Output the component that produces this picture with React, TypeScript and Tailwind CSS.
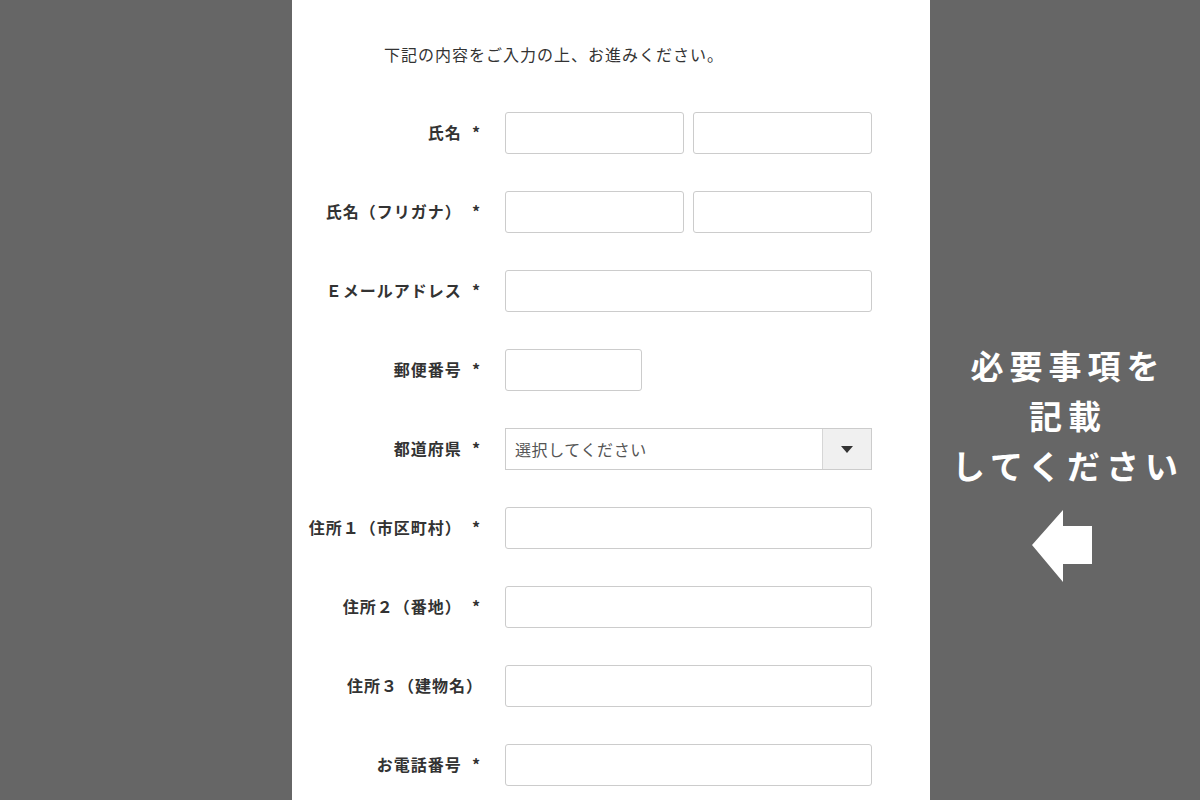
const FONT = "font-['Noto_Sans_CJK_JP','Noto_Sans',sans-serif]";

type Row = {
  label: string;
  required: boolean;
  kind: "text" | "split" | "short" | "select";
};

const rows: Row[] = [
  { label: "氏名", required: true, kind: "split" },
  { label: "氏名（フリガナ）", required: true, kind: "split" },
  { label: "Ｅメールアドレス", required: true, kind: "text" },
  { label: "郵便番号", required: true, kind: "short" },
  { label: "都道府県", required: true, kind: "select" },
  { label: "住所１（市区町村）", required: true, kind: "text" },
  { label: "住所２（番地）", required: true, kind: "text" },
  { label: "住所３（建物名）", required: false, kind: "text" },
  { label: "お電話番号", required: true, kind: "text" },
];

const inputCls =
  "h-[42px] rounded-[3px] border border-[#cccccc] bg-white outline-none";

function Field({ kind }: { kind: Row["kind"] }) {
  if (kind === "split") {
    return (
      <div className="flex gap-[9px]">
        <input type="text" className={`${inputCls} w-[179px]`} />
        <input type="text" className={`${inputCls} w-[179px]`} />
      </div>
    );
  }
  if (kind === "short") {
    return <input type="text" className={`${inputCls} w-[137px]`} />;
  }
  if (kind === "select") {
    return (
      <div className="flex h-[42px] w-[367px] border border-[#cccccc] bg-white">
        <span className="flex flex-1 items-center pl-[9px] text-[16px] tracking-[0.6px] text-[#555]">
          選択してください
        </span>
        <span className="flex w-[49px] items-center justify-center border-l border-[#d6d6d6] bg-[#f0f0f0]">
          <svg width="12" height="7" viewBox="0 0 12 7">
            <path d="M0 0h12L6 7z" fill="#333" />
          </svg>
        </span>
      </div>
    );
  }
  return <input type="text" className={`${inputCls} w-[367px]`} />;
}

export default function App() {
  return (
    <div className={`flex h-[800px] w-[1200px] overflow-hidden bg-[#666666] ${FONT}`}>
      <div className="w-[292px] shrink-0" />
      <div className="w-[638px] shrink-0 bg-white">
        <p className="pl-[92px] pt-[42px] text-[16px] leading-[24px] tracking-[1px] text-[#333]">
          下記の内容をご入力の上、お進みください。
        </p>
        <form className="mt-[46px] flex flex-col gap-[37px]" noValidate>
          {rows.map((r) => (
            <div key={r.label} className="flex items-center">
              <label className="w-[191px] shrink-0 whitespace-nowrap pb-[3px] text-right text-[16px] font-bold leading-[24px] tracking-[1px] text-[#333]">
                {r.label}
                {r.required && <span className="ml-[10px] pr-[2px]">*</span>}
              </label>
              <div className="ml-[22px]">
                <Field kind={r.kind} />
              </div>
            </div>
          ))}
        </form>
      </div>
      <div className="flex flex-1 flex-col items-center pt-[340px]">
        <p className="pl-[6px] text-center text-[33px] font-bold leading-[50px] tracking-[6px] text-white">
          必要事項を
          <br />
          記載
          <br />
          してください
        </p>
        <svg className="-ml-[6px] mt-[20px]" width="60" height="72" viewBox="0 0 60 72">
          <path d="M0 35L31 0V16H60V54H31V72z" fill="#fff" />
        </svg>
      </div>
    </div>
  );
}
